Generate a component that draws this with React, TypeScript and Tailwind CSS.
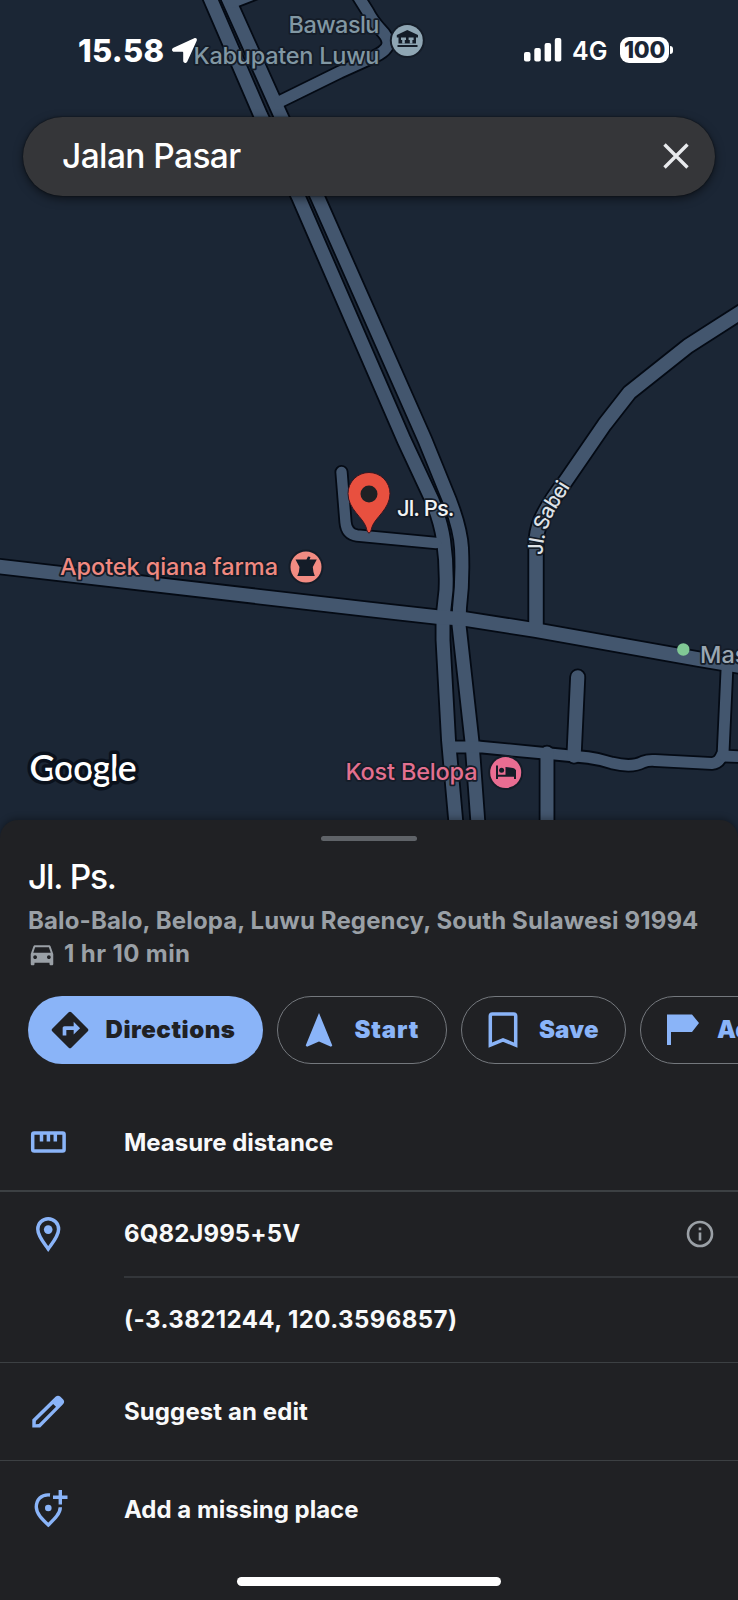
import type { ReactNode } from "react";

type Road = { d: string; w: number };

const roads: Road[] = [
  { d: "M210 -2 L260.5 115 L298.500 197 L404 440 L432 500 Q441 522 443.500 540 Q447 565 446 590 L443 618 L443 640 L448.500 740 L456 824", w: 13 },
  { d: "M228 -2 L280.500 115 L317.500 197 L425 440 L444.500 488 Q460 524 461.500 548 Q463 580 459.500 608 L459 625 L472 742 L478 824", w: 13 },
  { d: "M-5 566 L370 609.500 L437 617 L465 619 L535 630 L698 659 L745 667", w: 13.6 },
  { d: "M341.500 472 L345.500 522 Q346.500 534 357 535.500 L436 543", w: 10.400 },
  { d: "M536 628 L536 545 Q536 532 541 520 Q548 504 565 482 L604.500 424.500 L629.500 392.500 L688 346 L720 325.500 L745 309.500", w: 13.6 },
  { d: "M452 747 L480 747 L547 753.500 L588 757.500 Q600 759 612 763 Q632 768 643 762 Q648 760 655 760.500 L712 763.500 Q719 763 722 755", w: 10.800 },
  { d: "M727 668 L723 755 M724 756 L745 757", w: 10.800 },
  { d: "M577.700 677 L574 756", w: 13.3 },
  { d: "M547 753 L547 824", w: 13 },
  { d: "M280 101.500 L340 72 L371 58 Q388 51 388 43 Q388 37 380 29 Q372 20 368 12 L358 -4", w: 11 },
  { d: "M232 2 L260 -9", w: 12 },
];

function MapCanvas() {
  return (
    <svg className="absolute inset-0" width="738" height="824" viewBox="0 0 738 824" fill="none">
      <rect width="738" height="824" fill="#1b2635" />
      <g stroke="#040a14" strokeLinecap="round" strokeLinejoin="round">
        {roads.map((r, i) => (
          <path key={i} d={r.d} strokeWidth={r.w + 3.6} />
        ))}
      </g>
      <g stroke="#43566e" strokeLinecap="round" strokeLinejoin="round">
        {roads.map((r, i) => (
          <path key={i} d={r.d} strokeWidth={r.w} />
        ))}
      </g>

      <g
        className="font-['Inter',sans-serif]"
        fontSize="23.500"
        fontWeight="500"
        stroke="#141c28"
        strokeWidth="3.500"
        strokeLinejoin="round"
        paintOrder="stroke"
      >
        <text x="288.500" y="33" textLength="91" fill="#8197a3">Bawaslu</text>
        <text x="193.500" y="63.500" textLength="186" fill="#8197a3">Kabupaten Luwu</text>
        <text x="60" y="575" textLength="218" fill="#f08980">Apotek qiana farma</text>
        <text x="345.500" y="780" textLength="132" fill="#e3708f">Kost Belopa</text>
        <text x="397" y="516" textLength="57.500" fill="#f1f3f4" fontSize="22">Jl. Ps.</text>
        <text x="700" y="662.500" fill="#9aa7b2">Mas</text>
        <path id="sabei" d="M543.500 555 L543.500 543 Q546 528 555 511 L575 479" stroke="none" />
        <text fill="#dfe3e8" fontSize="20.500">
          <textPath href="#sabei" textLength="75">Jl. Sabei</textPath>
        </text>
      </g>
      <text x="29.500" y="780.500" textLength="107" className="font-['Lato',sans-serif]" fontSize="35.500" fontWeight="600" fill="#fff" stroke="#0a111c" strokeWidth="7" strokeLinejoin="round" paintOrder="stroke">
        Google
      </text>

      <circle cx="407.300" cy="40.500" r="17.500" fill="#141c28" />
      <circle cx="407.300" cy="40.500" r="15.500" fill="#8fa6b4" />
      <path d="M407.300 30 L418 35 V37.500 H416 V43.500 H398.500 V37.500 H396.800 V35 Z M397.500 45 H417.500 V47 H397.500 Z" fill="#141c28" />
      <path d="M401 37.500 H406 V40 H404.800 V43.500 H402.200 V40 H401 Z M408.600 37.500 H413.600 V40 H412.400 V43.500 H409.800 V40 H408.600 Z" fill="#8fa6b4" />

      <circle cx="306" cy="567" r="17.500" fill="#141c28" />
      <circle cx="306" cy="567" r="15.500" fill="#f28b82" />
      <path d="M295.500 559.500 H306.500 L308 556.500 L310.500 557 L309.500 559.500 H316.800 L312.800 567 Q313 571.500 314.800 576 H297.300 Q299.500 571.500 299.500 567 Z" fill="#141c28" />

      <circle cx="505.700" cy="772.500" r="17.500" fill="#141c28" />
      <circle cx="505.700" cy="772.500" r="15.500" fill="#e96d92" />
      <path d="M497 765.500 V779 M497 775.700 H515 M515 779 V770" stroke="#141c28" strokeWidth="2" />
      <path d="M505.500 767 L513 768 Q516 768.500 516 771.500 V775.700 H505.500 Z" fill="#141c28" />
      <circle cx="501.600" cy="770.300" r="2.500" fill="#141c28" />

      <circle cx="683.300" cy="649.500" r="6.200" fill="#81c995" />

      <path
        d="M369 533 C367.500 533 366.800 530 366 527 C363 517.500 348 509 348 493.500 A21 21 0 0 1 390 493.500 C390 509 375 517.500 372 527 C371.200 530 370.500 533 369 533 Z"
        fill="#e8503f"
        stroke="#3a1620"
        strokeWidth="1"
      />
      <circle cx="369" cy="494" r="8.500" fill="#202124" />
    </svg>
  );
}

function StatusBar() {
  return (
    <div className="relative flex h-[117px] items-start text-white">
      <div className="ml-[78px] mt-[31px] w-[86px] whitespace-nowrap text-[31px] font-extrabold leading-[40px] tracking-[0.3px]">15.58</div>
      <svg className="ml-[6px] mt-[37px]" width="28" height="28" viewBox="0 0 28 28" fill="#fff">
        <path d="M24.200 1.300 C26 0.500 27.500 2 26.700 3.800 L17.300 24.500 C16.300 26.800 13.200 26.300 13.200 23.800 V15.800 C13.200 15.100 12.900 14.800 12.200 14.800 H4.200 C1.700 14.800 1.200 11.700 3.500 10.700 Z" />
      </svg>
      <svg className="ml-[326px] mt-[38px]" width="38" height="24" viewBox="0 0 38 24" fill="#fff">
        <rect x="0" y="14" width="6.500" height="9.500" rx="2" />
        <rect x="10.300" y="10" width="6.500" height="13.500" rx="2" />
        <rect x="20.600" y="5" width="6.500" height="18.500" rx="2" />
        <rect x="30.800" y="0" width="6.500" height="23.500" rx="2" />
      </svg>
      <div className="ml-[10px] mt-[31px] w-[36px] whitespace-nowrap text-[25px] font-semibold leading-[41px]">4G</div>
      <div className="ml-[12px] mt-[37px] flex h-[26px] w-[49px] items-center justify-center rounded-[9px] bg-white text-[23px] font-extrabold leading-none tracking-[-0.3px] text-[#1b2635]">
        100
      </div>
      <div className="ml-[1px] mt-[46px] h-[8px] w-[3px] rounded-r-full bg-white" />
    </div>
  );
}

function SearchBar() {
  return (
    <div className="relative mx-[23px] flex h-[79px] items-center justify-between rounded-full bg-[#353639] pl-[39px] pr-[24px] shadow-[0_3px_10px_rgba(0,0,0,0.5),0_0_2px_rgba(0,0,0,0.7)]">
      <span className="text-[33.500px] font-medium leading-none tracking-[-0.6px] text-white">Jalan Pasar</span>
      <svg width="30" height="30" viewBox="0 0 30 30" stroke="#e8eaed" strokeWidth="3.400">
        <path d="M3.500 2.500 L26.500 25.500 M26.500 2.500 L3.500 25.500" />
      </svg>
    </div>
  );
}

function Chip({ icon, label, className }: { icon: ReactNode; label: string; className: string }) {
  return (
    <button className={`flex h-[68px] shrink-0 items-center rounded-full text-[24px] font-black ${className}`}>
      {icon}
      <span className="whitespace-nowrap">{label}</span>
    </button>
  );
}

function Row({ icon, children, className }: { icon?: ReactNode; children: ReactNode; className: string }) {
  return (
    <div className={`flex shrink-0 items-stretch border-[#3c4043] ${className}`}>
      <div className="flex w-[124px] shrink-0 items-center pl-[28px]">{icon}</div>
      {children}
    </div>
  );
}

const rowText = "flex flex-1 items-center whitespace-nowrap text-[24px] font-bold text-[#f8f9fa]";

export default function App() {
  return (
    <div className="relative flex h-[1600px] w-[738px] flex-col overflow-hidden bg-[#1b2635] font-['Inter',sans-serif]">
      <MapCanvas />
      <StatusBar />
      <SearchBar />
      <div className="h-[624px] shrink-0" />

      <div className="relative flex flex-1 flex-col rounded-t-[18px] bg-[#202124] shadow-[0_-2px_6px_rgba(0,0,0,0.3)]">
        <div className="mt-[16px] h-[5px] w-[96px] shrink-0 self-center rounded-full bg-[#5f6368]" />
        <h1 className="ml-[28px] mt-[14px] h-[42px] text-[33.500px] font-medium leading-[44px] tracking-[-1.200px] text-white">Jl. Ps.</h1>
        <div className="ml-[28px] mt-[7px] h-[33px] whitespace-nowrap text-[24px] font-bold leading-[33px] tracking-[0.14px] text-[#9aa0a6]">
          Balo-Balo, Belopa, Luwu Regency, South Sulawesi 91994
        </div>
        <div className="ml-[27px] flex h-[33px] items-center gap-[7px] text-[24px] font-bold tracking-[0.4px] text-[#9aa0a6]">
          <svg width="30" height="30" viewBox="0 0 24 24" fill="#9aa0a6">
            <path d="M18.92 6.01C18.72 5.42 18.16 5 17.5 5h-11c-.66 0-1.21.42-1.42 1.01L3 12v8c0 .55.45 1 1 1h1c.55 0 1-.45 1-1v-1h12v1c0 .55.45 1 1 1h1c.55 0 1-.45 1-1v-8l-2.08-5.990zM6.5 16c-.83 0-1.5-.67-1.5-1.5S5.670 13 6.5 13s1.5.67 1.5 1.5S7.330 16 6.5 16zm11 0c-.83 0-1.5-.67-1.5-1.5s.67-1.5 1.5-1.5 1.5.67 1.5 1.5-.67 1.5-1.5 1.5zM5 11l1.5-4.500h11L19 11H5z" />
          </svg>
          <span>1 hr 10 min</span>
        </div>

        <div className="ml-[28px] mt-[26px] flex gap-[14px] overflow-hidden">
          <Chip
            className="w-[235px] gap-[14px] bg-[#8ab4f8] pl-[19.500px] tracking-[0.55px] text-[#202124]"
            label="Directions"
            icon={
              <svg className="shrink-0" width="44" height="44" viewBox="0 0 24 24" fill="#202124">
                <path d="M21.710 11.290l-9-9c-.39-.39-1.020-.39-1.410 0l-9 9c-.39.39-.39 1.020 0 1.410l9 9c.39.39 1.020.39 1.410 0l9-9c.39-.38.39-1.010 0-1.410zM14 14.500V12h-4v3H8v-4c0-.55.45-1 1-1h5V7.500l3.500 3.500-3.500 3.500z" />
              </svg>
            }
          />
          <Chip
            className="w-[170px] gap-[21.500px] border-[1.500px] border-[#74787d] pl-[27px] tracking-[0.8px] text-[#8ab4f8]"
            label="Start"
            icon={
              <svg className="shrink-0" width="28" height="34" viewBox="0 0 28 34" fill="#8ab4f8">
                <path d="M14 0 L27.300 32.500 L26 33.800 L14 28.500 L2 33.800 L0.700 32.500 Z" />
              </svg>
            }
          />
          <Chip
            className="w-[165px] gap-[21px] border-[1.500px] border-[#74787d] pl-[26px] tracking-[0.1px] text-[#8ab4f8]"
            label="Save"
            icon={
              <svg className="shrink-0" width="30" height="36" viewBox="0 0 30 36" fill="none" stroke="#8ab4f8" strokeWidth="3.500">
                <path d="M2.300 33.200 V4 Q2.300 1.900 4.400 1.900 H25.600 Q27.700 1.900 27.700 4 V33.200 L15 27.800 Z" />
              </svg>
            }
          />
          <Chip
            className="w-[180px] gap-[18px] border-[1.500px] border-[#74787d] pl-[26px] tracking-[0.3px] text-[#8ab4f8]"
            label="Add"
            icon={
              <svg className="shrink-0" width="32" height="32" viewBox="0 0 32 32" fill="#8ab4f8">
                <path d="M0 0.500 H25 L32 9 L25 18 H4 V31 H0 Z" />
              </svg>
            }
          />
        </div>

        <div className="mt-[31px] flex flex-col">
          <Row
            className="h-[97px] border-b-2"
            icon={
              <svg width="38" height="24" viewBox="0 0 38 24" fill="none" stroke="#8ab4f8" strokeWidth="3.500">
                <rect x="4.700" y="2" width="31.400" height="18" rx="1.500" />
                <path d="M13.500 2 V10.600 M20.400 2 V10.600 M27.300 2 V10.600" />
              </svg>
            }
          >
            <div className={`${rowText} tracking-[-0.03px]`}>Measure distance</div>
          </Row>
          <Row
            className="h-[86px]"
            icon={
              <svg width="38" height="36" viewBox="0 0 38 36" fill="none">
                <path d="M20.200 32 C16 26 9.800 19 9.800 12.200 A10.400 10.400 0 0 1 30.600 12.200 C30.600 19 24.400 26 20.200 32 Z" stroke="#8ab4f8" strokeWidth="3.500" />
                <circle cx="20.200" cy="12.600" r="4.300" fill="#8ab4f8" />
              </svg>
            }
          >
            <div className={`${rowText} justify-between border-b-2 border-[#33363a] pr-[24px] tracking-[0.1px]`}>
              <span>6Q82J995+5V</span>
              <svg width="28" height="28" viewBox="0 0 28 28" fill="none" stroke="#9aa0a6" strokeWidth="2.600">
                <circle cx="14" cy="14" r="12" />
                <path d="M14 12.500 V20.500 M14 7.500 V10.200" />
              </svg>
            </div>
          </Row>
          <Row className="h-[85px] border-b">
            <div className={`${rowText} tracking-[0.42px]`}>(-3.3821244, 120.3596857)</div>
          </Row>
          <Row
            className="h-[98px] border-b"
            icon={
              <svg width="38" height="34" viewBox="0 0 38 34" fill="#8ab4f8">
                <path fillRule="evenodd" d="M4.300 32.500 V24.500 L27.500 1.800 Q30 -0.300 32.500 1.800 L35 4.300 Q37.300 6.800 35 9.300 L12.200 32.500 Z M7.700 29.200 L10.800 29 L28 11.700 L25.200 8.900 L7.900 26 Z" />
              </svg>
            }
          >
            <div className={`${rowText} tracking-[0.1px]`}>Suggest an edit</div>
          </Row>
          <Row
            className="h-[97px]"
            icon={
              <svg width="42" height="40" viewBox="0 0 42 40" fill="none" stroke="#8ab4f8" strokeWidth="3.400">
                <path d="M22 5 C13 4 8.300 10 8.300 17 C8.300 23.500 14 29 20.300 35 C26.500 29 32.300 23.500 32.300 17.200" />
                <path d="M32.300 0 V14.500 M25 7.300 H39.500" />
                <circle cx="20.300" cy="18" r="3.300" fill="#8ab4f8" stroke="none" />
              </svg>
            }
          >
            <div className={`${rowText} tracking-[0px]`}>Add a missing place</div>
          </Row>
        </div>
        <div className="mt-[19px] h-[9px] w-[264px] shrink-0 self-center rounded-full bg-white" />
      </div>
    </div>
  );
}
